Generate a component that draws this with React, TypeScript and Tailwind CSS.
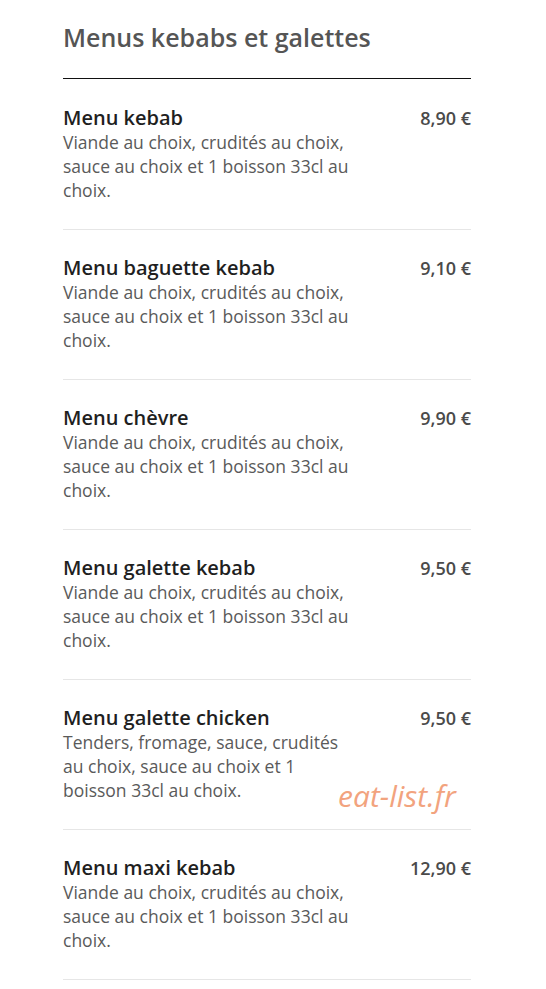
const ITEMS = [
  { name: "Menu kebab", price: "8,90 €", desc: "Viande au choix, crudités au choix, sauce au choix et 1 boisson 33cl au choix." },
  { name: "Menu baguette kebab", price: "9,10 €", desc: "Viande au choix, crudités au choix, sauce au choix et 1 boisson 33cl au choix." },
  { name: "Menu chèvre", price: "9,90 €", desc: "Viande au choix, crudités au choix, sauce au choix et 1 boisson 33cl au choix." },
  { name: "Menu galette kebab", price: "9,50 €", desc: "Viande au choix, crudités au choix, sauce au choix et 1 boisson 33cl au choix." },
  { name: "Menu galette chicken", price: "9,50 €", desc: "Tenders, fromage, sauce, crudités au choix, sauce au choix et 1 boisson 33cl au choix." },
  { name: "Menu maxi kebab", price: "12,90 €", desc: "Viande au choix, crudités au choix, sauce au choix et 1 boisson 33cl au choix." },
];

export default function App() {
  return (
    <div className="min-h-[989px] bg-white font-['Open_Sans',sans-serif]">
      <div className="relative w-[408px] ml-[63px] pt-[21px]">
        <h1 className="text-[25px] leading-[32px] font-semibold text-[#555555]">Menus kebabs et galettes</h1>
        <div className="mt-[25px] h-px bg-[#111111]" />
        {ITEMS.map((item, i) => (
          <div key={item.name} className={`flex justify-between items-start pb-[27px] border-b border-[#e6e6e6] ${i === 0 ? "pt-[27px]" : "pt-[26px]"}`}>
            <div className="w-[294px]">
              <p className="text-[20px] leading-[24px] font-semibold text-[#1f1f1f]">{item.name}</p>
              <p className="text-[17.5px] leading-[24px] text-[#5a5a5a]">{item.desc}</p>
            </div>
            <p className="text-[18px] leading-[24px] font-semibold text-[#4a4a4a] whitespace-nowrap">{item.price}</p>
          </div>
        ))}
        {/* watermark */}
        <span className="absolute left-[275px] top-[776px] text-[30px] leading-[40px] italic text-[#f2a37e]">eat-list.fr</span>
      </div>
    </div>
  );
}
